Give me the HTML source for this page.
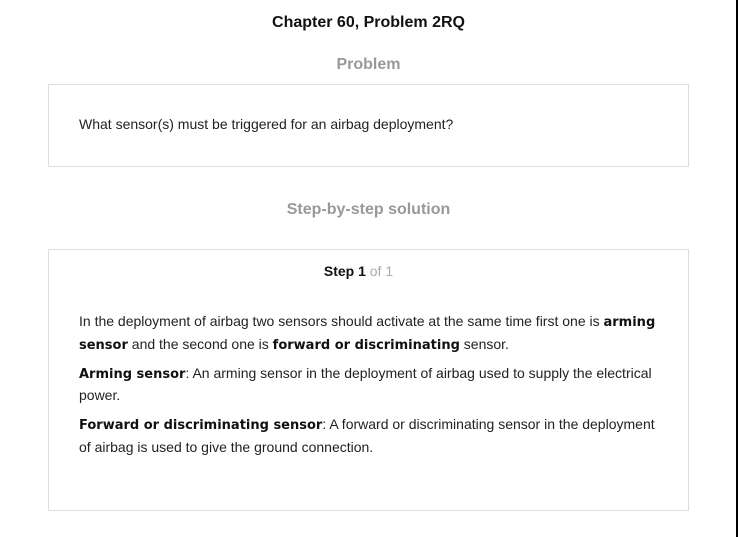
<!DOCTYPE html>
<html><head><style>
body{margin:0;width:738px;height:537px;background:#fff;font-family:"Liberation Sans",Arial,sans-serif;color:#222;position:relative;overflow:hidden}
.r{position:absolute;right:0;top:0;width:2px;height:537px;background:#000}
.t{position:absolute;left:0;width:737px;text-align:center;font-weight:bold}
.box{position:absolute;left:48px;width:639px;border:1px solid #ddd;box-sizing:content-box}
p{margin:0;font-size:14px;line-height:22.5px}
b{font-family:"DejaVu Sans",Verdana,sans-serif;font-size:13px;font-weight:bold;color:#111;line-height:1}
</style></head><body>
<div class="r"></div>
<div class="t" style="top:14px;font-size:16px;color:#111">Chapter 60, Problem 2RQ</div>
<div class="t" style="top:56px;font-size:16px;color:#999">Problem</div>
<div class="box" style="top:84px;height:81px">
<p style="position:absolute;left:30px;top:28px;color:#222">What sensor(s) must be triggered for an airbag deployment?</p>
</div>
<div class="t" style="top:201px;font-size:16px;color:#999">Step-by-step solution</div>
<div class="box" style="top:249px;height:260px">
<div style="position:absolute;left:0;width:619px;top:13px;text-align:center;font-size:14px"><span style="font-weight:bold;color:#111">Step 1</span> <span style="color:#aaa">of 1</span></div>
<div style="position:absolute;left:30px;top:60px;width:590px">
<p>In the deployment of airbag two sensors should activate at the same time first one is <b>arming sensor</b> and the second one is <b>forward or discriminating</b> sensor.</p>
<p style="margin-top:6.5px">
<b>Arming sensor</b>: An arming sensor in the deployment of airbag used to supply the electrical power.</p>
<p style="margin-top:6.5px"><b>Forward or discriminating sensor</b>: A forward or discriminating sensor in the deployment of airbag is used to give the ground connection.</p>
</div>
</div>
</body></html>
